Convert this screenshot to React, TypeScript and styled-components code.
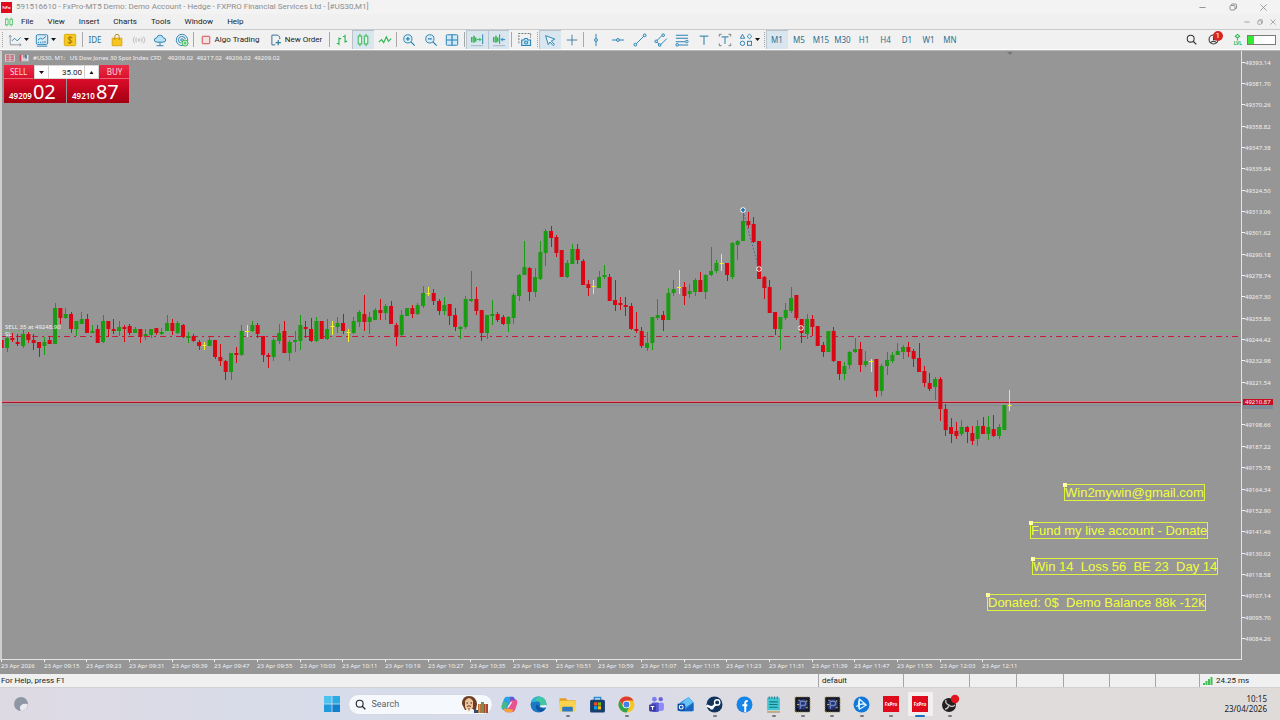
import React from "react";
import styled, { createGlobalStyle } from "styled-components";

const UI = `Roboto, "Open Sans", "Liberation Sans", sans-serif`;
const NARROW = `"Noto Sans", "Open Sans", "Liberation Sans", sans-serif`;
const BLUE = "#2b82b4";
const GREEN = "#2fb84f";

const GlobalStyle = createGlobalStyle`
  *, *::before, *::after { box-sizing: border-box; }
  body { margin: 0; font-family: ${UI}; font-size: 8px; color: #1b1b1b; overflow: hidden; }
  button, input { font: inherit; color: inherit; margin: 0; padding: 0; border: 0; background: none; }
  svg { display: block; flex: none; }
`;

/* ---------- window frame ---------- */

const Page = styled.div`
  display: flex;
  flex-direction: column;
  height: 100vh;
  min-height: 400px;
  background: #f0f0f0;
`;

const TitleBar = styled.header`
  display: flex;
  align-items: center;
  height: 14px;
  padding-left: 1px;
  background: #f3f3f3;
  color: #8d8d8d;
`;

const Title = styled.h1`
  flex: 1;
  margin: 0 0 0 4px;
  font-size: 8px;
  line-height: 14px;
  font-weight: 400;
`;

const WindowButtons = styled.div<{ $gap: number; $end: number }>`
  display: flex;
  align-items: center;
  gap: ${(p) => p.$gap}px;
  padding-right: ${(p) => p.$end}px;
  color: #808080;
  button { display: flex; }
`;

const MenuBar = styled.nav`
  display: flex;
  align-items: center;
  height: 15px;
  padding-left: 4px;
  background: #f0f0f0;
`;

const MenuList = styled.div`
  display: flex;
  flex: 1;
  gap: 14px;
  padding-left: 7px;
  line-height: 15px;
`;

const ToolBar = styled.div`
  display: flex;
  align-items: stretch;
  height: 21px;
  border-top: 1px solid #cacaca;
  border-bottom: 1px solid #fbfbfb;
  background: #f1f1f1;
`;

const Tool = styled.button<{ $w?: number; $on?: boolean; $gap?: number }>`
  display: flex;
  align-items: center;
  justify-content: center;
  gap: ${(p) => p.$gap ?? 2}px;
  width: ${(p) => p.$w ?? 22}px;
  flex: none;
  white-space: nowrap;
  background: ${(p) => (p.$on ? "#d9e6ef" : "none")};
  box-shadow: ${(p) => (p.$on ? "inset 1px 1px #b9c4cc" : "none")};
`;

const TimeframeTool = styled(Tool)`
  color: #2d6f8f;
  font-family: ${NARROW};
`;

const Separator = styled.span<{ $w?: number }>`
  flex: none;
  width: ${(p) => p.$w ?? 3}px;
  margin: 2px 0;
  background: linear-gradient(#a9a9a9, #a9a9a9) center / 1px 100% no-repeat;
`;

const Grip = styled.span<{ $w?: number }>`
  flex: none;
  width: ${(p) => p.$w ?? 3}px;
  margin: 2px 0;
  background: repeating-linear-gradient(#a0a0a0 0 1px, transparent 1px 2px) center / 1px 100% no-repeat;
`;

const ToolEnd = styled.div`
  display: flex;
  align-items: center;
  gap: 11px;
  margin-left: auto;
  padding-right: 4px;
`;

const Account = styled.button`
  position: relative;
  display: flex;
  margin-right: 2px;
`;

const Badge = styled.span`
  position: absolute;
  right: -4px;
  top: -3px;
  width: 10px;
  height: 10px;
  border-radius: 50%;
  background: #d92424;
  color: #fff;
  line-height: 10px;
`;

const Level = styled.span`
  display: flex;
  flex-direction: column;
  align-items: center;
  margin-left: 2px;
  color: #2fb84f;
  font-size: 5px;
  font-weight: 700;
  line-height: 5px;
`;

const Battery = styled.span`
  width: 29px;
  height: 10px;
  margin-left: -6px;
  border: 1px solid #7b7b7b;
  background: linear-gradient(90deg, #35ea35 6px, #fff 6px);
`;

/* ---------- chart ---------- */

const ChartArea = styled.main`
  display: grid;
  grid-template-columns: 1fr 38px;
  grid-template-rows: 1fr 14px;
  flex: 1;
  min-height: 0;
  border-top: 1px solid #b4b4b4;
  background: #969696;
  font-family: ${NARROW};
`;

const Plot = styled.section`
  position: relative;
  overflow: hidden;
  border: solid #e4e4e4;
  border-width: 0 1px 1px 2px;
  border-left-color: #cfcfcf;
`;

const Canvas = styled.svg`
  width: 100%;
  height: 100%;
  overflow: hidden;
`;

const AxisCanvas = styled(Canvas)`
  font-size: 6px;
  fill: #f2f2f2;
`;

const TimeScale = styled(AxisCanvas)`
  grid-column: 1 / -1;
`;

const Overlay = styled.div`
  position: absolute;
  left: 2px;
  top: 2px;
`;

const Caption = styled.div`
  display: flex;
  align-items: center;
  gap: 4px;
  height: 10px;
  padding-left: 1px;
  color: #f4f4f4;
  font-size: 6px;
  white-space: pre;
`;

const TradePanel = styled.form`
  display: grid;
  grid-template-columns: 62px 62px;
  column-gap: 1px;
  width: 125px;
  margin-top: 2px;
  position: relative;
`;

const Quote = styled.button<{ $side: "left" | "right" }>`
  display: flex;
  flex-direction: column;
  height: 38px;
  color: #fff;
  background: linear-gradient(#ea2c48, #d40a26 45%, #a30012);
  text-align: ${(p) => p.$side};
`;

const QuoteName = styled.span<{ $side: "left" | "right" }>`
  align-self: ${(p) => (p.$side === "left" ? "flex-start" : "flex-end")};
  width: 29px;
  height: 14px;
  line-height: 14px;
  text-align: center;
  color: #ffd9dd;
  border-bottom: 1px solid #ee6274;
`;

const QuotePrice = styled.span`
  display: flex;
  align-items: baseline;
  align-self: flex-start;
  gap: 1px;
  padding-left: 5px;
  font-weight: 600;
  line-height: 25px;
  b { font-size: 20px; font-weight: 400; }
`;

const Volume = styled.div`
  position: absolute;
  left: 30px;
  top: 0;
  display: flex;
  width: 65px;
  height: 14px;
  background: #fff;
  border: 1px solid #d8d8d8;
  font-family: ${UI};
  button { display: flex; align-items: center; justify-content: center; width: 13px; }
  input {
    flex: 1;
    min-width: 0;
    padding-right: 2px;
    text-align: right;
    border: solid #cfcfcf;
    border-width: 0 1px;
  }
`;

const Note = styled.div<{ $x: number; $y: number }>`
  position: absolute;
  left: ${(p) => p.$x}px;
  top: ${(p) => p.$y}px;
  height: 17px;
  border: 1px solid #e0f23c;
  color: #f0ff3c;
  font: 13px/15px "Liberation Sans", Arial, sans-serif;
  white-space: pre;
  &::before {
    content: "";
    position: absolute;
    left: -2px;
    top: -2px;
    width: 4px;
    height: 4px;
    background: #ffffa0;
  }
`;

/* ---------- bottom bars ---------- */

const StatusBar = styled.footer`
  display: flex;
  height: 14px;
  line-height: 14px;
  background: #f0f0f0;
  border-bottom: 1px solid #d2d2d6;
`;

const StatusCell = styled.span<{ $w?: number }>`
  display: flex;
  align-items: center;
  gap: 3px;
  ${(p) => (p.$w ? `width: ${p.$w}px; flex: none; border-left: 1px solid #a5a5a5; padding-left: 3px;` : "flex: 1; padding-left: 1px;")}
  height: 13px;
`;

const TaskBar = styled.div`
  display: grid;
  grid-template-columns: 1fr auto 1fr;
  align-items: center;
  height: 32px;
  background: linear-gradient(90deg, #dedae4, #d6dcea 28%, #d9dbea 48%, #dfdcde 62%, #dfdbd9);
  font-family: ${NARROW};
`;

const TaskGroup = styled.div`
  display: flex;
  align-items: center;
`;

const StartButton = styled.button`
  display: flex;
  justify-content: center;
  width: 32px;
`;

const SearchBox = styled.label`
  display: flex;
  align-items: center;
  width: 145px;
  height: 21px;
  padding: 0 3px 0 6px;
  margin-right: 2px;
  border-radius: 11px;
  background: #f5f8fd;
  border: 1px solid #d5d8e2;
  input {
    flex: 1;
    min-width: 0;
    margin-left: 6px;
    font: 9px ${UI};
    outline: 0;
  }
  input::placeholder { color: #5c5f66; opacity: 1; }
`;

const Apps = styled.div`
  display: flex;
  width: 470px;
`;

const AppButton = styled.button<{ $state?: "open" | "active" }>`
  position: relative;
  display: flex;
  flex: 1;
  align-items: center;
  justify-content: center;
  height: 24px;
  border-radius: 3px;
  background: ${(p) => (p.$state === "active" ? "linear-gradient(#f3efee, #f3efee) center / 25px 24px no-repeat" : "none")};
  &::after {
    content: "";
    display: ${(p) => (p.$state ? "block" : "none")};
    position: absolute;
    bottom: -1px;
    width: ${(p) => (p.$state === "active" ? 10 : 4)}px;
    height: 2px;
    border-radius: 1px;
    background: ${(p) => (p.$state === "active" ? "#1670c4" : "#7a7a7e")};
  }
`;

const Clock = styled.time`
  justify-self: end;
  padding-right: 13px;
  text-align: right;
  line-height: 10px;
`;

/* ---------- icons ---------- */

type IconProps = { size?: number; color?: string; children: React.ReactNode };

const Icon = ({ size = 14, color = BLUE, children }: IconProps) => (
  <svg width={size} height={size} viewBox="0 0 16 16" fill="none" stroke={color} strokeWidth="1.1" aria-hidden="true">
    {children}
  </svg>
);

const Caret = ({ up }: { up?: boolean }) => (
  <svg width="5" height="3" viewBox="0 0 5 3" aria-hidden="true">
    <path d={up ? "M0.5 3h4L2.5 0z" : "M0 0h5L2.5 3z"} fill="#111" />
  </svg>
);

const FxLogo = ({ size }: { size: number }) => (
  <svg width={size} height={size} viewBox="0 0 16 16" aria-hidden="true">
    <rect width="16" height="16" fill="#df0a1c" />
    <text x="8" y="9.6" fontSize="4.4" fontWeight="700" fill="#fff" textAnchor="middle">FxPro</text>
  </svg>
);

const MinimizeIcon = ({ size }: { size: number }) => <Icon size={size} color="#888"><path d="M1 8h14" strokeWidth="2" /></Icon>;
const RestoreIcon = ({ size }: { size: number }) => (
  <Icon size={size} color="#888"><path d="M5 4V3q0-1 1-1h7q2 0 2 2v6q0 1-1 1h-2" strokeWidth="1.8" /><rect x="2" y="5" width="10" height="9" rx="2" strokeWidth="1.8" /></Icon>
);
const CloseIcon = ({ size }: { size: number }) => <Icon size={size} color="#888"><path d="M1 1l14 14M15 1L1 15" strokeWidth="1.8" /></Icon>;

const CandlesIcon = ({ size = 14 }: { size?: number }) => (
  <Icon size={size} color={GREEN}><path d="M4.500 1v2.500M4.500 12.500V15M11.500 1v2.500M11.500 12.500V15" /><rect x="2.500" y="3.500" width="4" height="9" fill="#e2f7e6" /><rect x="9.500" y="3.500" width="4" height="9" fill="#e2f7e6" /></Icon>
);

const icons = {
  line: <Icon color="#5f7f94"><path d="M2.500 3v10.500H15M1 4.500l1.500-2L4 4.500M13 12l2 1.500-2 1.500" stroke="#8b9aa4" /><path d="M4.500 9l3-3 3 3 4-4" stroke={BLUE} /></Icon>,
  indicators: <Icon><rect x="1.500" y="2" width="13" height="11" rx="1.500" fill="#d9ecf6" /><path d="M3.500 8l2.500-2 2.500 1L12.500 4M4 11.500V10M6.500 11.500V10M9 11.500V9.500M11.500 11.500V9M2 15h12" /></Icon>,
  dollar: <Icon><rect x="1.500" y="1.500" width="13" height="13" rx="1" fill="#f7c81e" stroke="#dcaa10" /><path d="M10.500 5.500Q8 4 6.300 5.300T8 8t1.800 2.700-4.300.2M8 3.300v9.400" stroke="#9b7408" /></Icon>,
  bag: <Icon><path d="M2.500 6h11v8.500h-11z" fill="#f6c51f" stroke="#d9a413" /><path d="M5.500 8V4Q5.500 1.500 8 1.500T10.500 4v4" stroke="#b98d10" /></Icon>,
  signal: <Icon color="#bcbcbc"><circle cx="8" cy="8" r="1.300" /><path d="M5.200 5.200q-2 2.800 0 5.600M10.800 5.200q2 2.800 0 5.600M2.800 4q-2.800 4 0 8M13.200 4q2.800 4 0 8" /></Icon>,
  cloud: <Icon><path d="M4.500 10.500Q1.500 10.300 1.500 8T4.300 5.500Q5 2.500 8 2.500T11.700 5.500Q14.500 5.600 14.500 8t-3 2.500z" fill="#b9e2f4" /><path d="M8 10.500v4M4 14.500h8" /></Icon>,
  target: <Icon><path d="M9 14.400A6.500 6.500 0 1 1 14.400 9M7 11.800A4 4 0 1 1 11.800 7" /><circle cx="8" cy="8" r="1.500" /><circle cx="11.500" cy="11.500" r="3.400" fill="#dff6e3" stroke={GREEN} /><path d="M11.500 9.700v3.600M9.700 11.500h3.600" stroke={GREEN} /></Icon>,
  stop: <Icon size={10}><rect x="2" y="2" width="12" height="12" rx="1" fill="#fbe0e0" stroke="#cf4a4a" strokeWidth="1.500" /></Icon>,
  order: <Icon size={12} color="#37718f"><path d="M13 7V4l-2.500-2.500h-8v13H7" strokeWidth="1.300" /><path d="M11 8v7M7.500 11.500h7" stroke="#2b7b9b" strokeWidth="1.500" /></Icon>,
  bars: <Icon color={GREEN}><path d="M4.500 5v9M2 12h2.500M4.500 6.500H7M11.500 2v9M9 4h2.500M11.500 9.500H14" strokeWidth="1.300" /></Icon>,
  candles: <CandlesIcon />,
  zigzag: <Icon color={GREEN}><path d="M1 10.500l3-3 2.500 3.500 3-6.500 2.500 5 3-3" strokeWidth="1.300" /></Icon>,
  zoomIn: <Icon><circle cx="6.700" cy="6.700" r="4.700" fill="#d9edf7" /><path d="M10.200 10.200l4.300 4.300M6.700 4.500v4.400M4.500 6.700h4.400" strokeWidth="1.400" /></Icon>,
  zoomOut: <Icon><circle cx="6.700" cy="6.700" r="4.700" fill="#d9edf7" /><path d="M10.200 10.200l4.300 4.300M4.500 6.700h4.400" strokeWidth="1.400" /></Icon>,
  grid: <Icon><rect x="1.500" y="2" width="13" height="12" rx="1" fill="#cfe9f6" /><path d="M8 2v12M1.500 8h13" strokeWidth="1.400" /></Icon>,
  scroll: <Icon><path d="M2 4.500v6M4.500 3v8M6.500 5v5" stroke={GREEN} strokeWidth="1.800" /><path d="M8 7.500h4.500M10.500 5.500l2 2-2 2" stroke={GREEN} /><path d="M14.500 1.500v11" /><path d="M1 14.500h14" stroke="#9fb4c2" /></Icon>,
  shift: <Icon><path d="M2 4.500v6M4.500 3v8M6.500 5v5" stroke={GREEN} strokeWidth="1.800" /><path d="M8.700 1.500v11M15 7.500h-4.500M12.500 5.500l-2 2 2 2" /><path d="M1 14.500h14" stroke="#9fb4c2" /></Icon>,
  camera: <Icon size={15}><path d="M2 12V1.500h12.500V6" stroke="#6b7880" strokeDasharray="2 1.300" /><path d="M5 8.500h2.200l1-1.500h2.600l1 1.500H14.500v6H5z" fill="#c6e6f5" /><circle cx="9.700" cy="11.300" r="1.600" /></Icon>,
  cursor: <Icon><path d="M3 3l10.500 4-4 2 3.500 4-1.500 1.300-3.500-4-2 3z" fill="#eaf5fb" /></Icon>,
  cross: <Icon color="#3f7f9e"><path d="M8 2v12M2 8h12" /></Icon>,
  vline: <Icon><path d="M8 1v14" /><circle cx="8" cy="8" r="1.700" fill="#cfe9f6" /></Icon>,
  hline: <Icon><path d="M1 8h14" /><circle cx="8" cy="8" r="1.700" fill="#cfe9f6" /></Icon>,
  trend: <Icon><path d="M3.500 12.500l9-9" /><circle cx="2.700" cy="13.300" r="1.600" fill="#cfe9f6" /><circle cx="13.300" cy="2.700" r="1.600" fill="#cfe9f6" /></Icon>,
  channel: <Icon><path d="M2.500 9.500l7-7M7.500 13.500l7-7M2.500 9.500l4 4" /><circle cx="2.500" cy="9.500" r="1.500" fill="#cfe9f6" /><circle cx="6.500" cy="13.700" r="1.500" fill="#cfe9f6" /><circle cx="10.500" cy="2.500" r="1.500" fill="#cfe9f6" /></Icon>,
  fibo: <Icon><path d="M1 2.500h14M1 6h14M1 10h11M4 13.700h11" strokeWidth="1.200" /><circle cx="13.500" cy="9.800" r="1.500" fill="#cfe9f6" /><circle cx="2.500" cy="13.500" r="1.500" fill="#cfe9f6" /></Icon>,
  text: <Icon color="#4a8fb3"><path d="M3 3.500h10M8 3.500v10" strokeWidth="1.400" /></Icon>,
  textBox: <Icon color="#4a8fb3"><path d="M4 4.500h8M8 4.500v8" strokeWidth="1.300" /><path d="M1.500 4V1.500H4M12 1.500h2.500V4M14.500 12v2.500H12M4 14.500H1.500V12" stroke="#6b7880" /></Icon>,
  shapes: <Icon><path d="M4 1.500l2.500 4.500h-5zM12 1.300l2.700 2.600L12 6.500 9.300 3.900z" /><circle cx="4" cy="11.800" r="2.500" /><rect x="9.700" y="9.500" width="4.600" height="4.600" /></Icon>,
  search: <Icon size={11} color="#333"><circle cx="6.800" cy="6.800" r="5" strokeWidth="1.500" /><path d="M10.500 10.500l4.500 4.500" strokeWidth="1.700" /></Icon>,
  user: <Icon size={11} color="#333"><circle cx="8" cy="8" r="6.500" strokeWidth="1.500" /><path d="M8 3.500v5h4M3 13q5-5 10 0" strokeWidth="1.500" /></Icon>,
};

const Windows = () => (
  <svg width="16" height="16" viewBox="0 0 16 16" aria-hidden="true">
    <path d="M0 0h7.600v7.600H0z" fill="#4cc3ee" /><path d="M8.400 0H16v7.600H8.400z" fill="#2ba9e2" />
    <path d="M0 8.400h7.600V16H0z" fill="#1f9bdc" /><path d="M8.400 8.400H16V16H8.400z" fill="#1180cc" />
  </svg>
);

const Poet = () => (
  <svg width="28" height="17" viewBox="0 0 28 17" aria-hidden="true">
    <path d="M1 8Q1 0 8 0t8 8l-1 6H4z" fill="#6b3d22" />
    <path d="M4 5q4-6 8 0v6q-2 5-4 5t-4-5z" fill="#eec49c" />
    <path d="M4 16h10l-2-3H6z" fill="#f5f2ea" /><path d="M6 10.500q2-1.500 4 0M8 12v2.500" stroke="#6b3d22" fill="none" />
    <path d="M5.500 7h1.500M9.500 7H11" stroke="#3a2415" />
    <path d="M13 14h4v3h-4z" fill="#2f4d7a" /><path d="M17 8h3v9h-3z" fill="#b5733a" />
    <path d="M20 6h3v11h-3z" fill="#7b8d4d" /><path d="M23 8h4v9h-4z" fill="#a8472c" /><path d="M24.500 8v9M18.500 8v9" stroke="#e4b56a" strokeWidth=".6" />
  </svg>
);

const AppSvg = ({ children }: { children: React.ReactNode }) => (
  <svg width="17" height="17" viewBox="0 0 16 16" aria-hidden="true">{children}</svg>
);

const ChipIcon = () => (
  <AppSvg>
    <rect x="1" y="1" width="14" height="14" rx="1" fill="#14182a" stroke="#8a7d4a" strokeDasharray="1 1" />
    <path d="M3 5h2l2-2h4l2 3v4l-3 3H5l-2-3z" fill="#22346e" />
    <path d="M6 12V5h3q2 0 2 2t-2 2H6" fill="none" stroke="#6f83c4" strokeWidth="1.300" /><path d="M3 8h2M11 11h2M4 4h1.500M12 4v1.500" stroke="#d3b556" />
  </AppSvg>
);

type App = { name: string; state?: "open" | "active"; art: React.ReactNode };

const apps: App[] = [
  { name: "Copilot", art: <AppSvg>
    <path d="M5.500.8h5.300q1.400 0 1.900 1.500L13.300 4H9.800L7 12.500Q6.500 13 5 13H3.200Q.6 13 .6 10.300q0-1 .5-2.600L2.700 3Q3.500.8 5.500.8z" fill="#2aa3e0" />
    <path d="M10.500 15.200H5.200q-1.400 0-1.900-1.500L2.700 12h3.500L9 3.500Q9.500 3 11 3h1.800q2.600 0 2.600 2.700 0 1-.5 2.600L13.300 13q-.8 2.200-2.800 2.200z" fill="#e8528f" />
    <path d="M.6 10.300q0-1 .5-2.600L2 5l4 1.500L4 13h-.8Q.6 13 .6 10.300z" fill="#48b982" />
    <path d="M10.500 15.200H5.200q-1.400 0-1.900-1.500L2.700 12h4l4.800 1z" fill="#f6a43a" />
    <path d="M12.700 2.300L13.300 4H9.800l-.6 1.500L8 1l2.800-.2q1.400 0 1.900 1.500z" fill="#6458d8" />
    <path d="M9.300 5.300h1.500L7.200 11H5.700z" fill="#fff" opacity=".85" />
  </AppSvg> },
  { name: "Edge", art: <AppSvg>
    <circle cx="8" cy="8" r="7.500" fill="#1b78c8" />
    <path d="M1 6Q3 .5 8.500.5T15.500 7q0 3.500-4 3.500-2.500 0-2-1.500 1-2-1-3.500T1 6z" fill="#42c8a0" />
    <path d="M1 6Q3 .8 8 .6q-3 1.500-2 5Q3 4.500 1 6z" fill="#2fb4d8" />
    <path d="M6 8q-2 5 4 7 3-.3 5-3.500-6 2-7-2.500z" fill="#0f559f" /><path d="M9.500 9q-.5 2.500 5.500 1.500l.5-2z" fill="#eef6fb" />
  </AppSvg> },
  { name: "File Explorer", state: "open", art: <AppSvg>
    <path d="M.5 2h6l1.500 2h7.500v4H.5z" fill="#e0a021" /><rect x=".5" y="4.500" width="15" height="10" rx="1" fill="#fbd24e" />
    <path d="M3 14.500V11q0-1 1-1h8q1 0 1 1v3.500z" fill="#2b78c4" />
  </AppSvg> },
  { name: "Microsoft Store", art: <AppSvg>
    <path d="M5 4V1.500h6V4" fill="none" stroke="#2d8fd6" strokeWidth="1.400" /><rect x="1" y="3.500" width="14" height="12" rx="1.500" fill="#173f6e" />
    <path d="M4.700 6h3v3h-3z" fill="#f25022" /><path d="M8.300 6h3v3h-3z" fill="#7fba00" /><path d="M4.700 9.600h3v3h-3z" fill="#00a4ef" /><path d="M8.300 9.600h3v3h-3z" fill="#ffb900" />
  </AppSvg> },
  { name: "Chrome", state: "open", art: <AppSvg>
    <circle cx="8" cy="8" r="7.500" fill="#f9c51d" /><path d="M1.500 4.250A7.500 7.500 0 0 1 14.500 4.250H8L5 9.500z" fill="#df3b30" />
    <path d="M1.500 4.250A7.500 7.500 0 0 0 8 15.500L11.300 9.700 4.800 9.800z" fill="#2fa350" />
    <circle cx="8" cy="8" r="3.600" fill="#fff" /><circle cx="8" cy="8" r="2.800" fill="#3f80ea" />
  </AppSvg> },
  { name: "Teams", art: <AppSvg>
    <circle cx="6" cy="3" r="2.200" fill="#7b7ff0" /><circle cx="12" cy="3" r="2" fill="#6a62dd" />
    <rect x="3" y="6" width="8" height="9" rx="2" fill="#5558d0" /><rect x="10" y="6" width="5" height="8" rx="2" fill="#8f8bf4" />
    <rect x="1" y="8" width="6.500" height="6.500" rx="1" fill="#3b3aa8" /><path d="M2.500 9.800H6M4.250 9.800v3.200" stroke="#fff" />
  </AppSvg> },
  { name: "Outlook", art: <AppSvg>
    <path d="M3 6l8-5 4.500 5v7q0 1.500-1.500 1.500H3z" fill="#2b8fe0" /><path d="M4 7l7-6 4 5-6 4z" fill="#69c3f4" /><path d="M15.500 6v8H6z" fill="#1a63c0" />
    <rect x=".5" y="7" width="7" height="7" rx="1" fill="#0f4fa8" /><circle cx="4" cy="10.500" r="1.800" fill="none" stroke="#fff" />
  </AppSvg> },
  { name: "Steam", state: "open", art: <AppSvg>
    <circle cx="8" cy="8" r="7.500" fill="#12335c" /><path d="M.6 9l5 2 4-3.500" stroke="#fff" strokeWidth="2.200" fill="none" />
    <circle cx="10.500" cy="6" r="2.500" fill="#12335c" stroke="#fff" strokeWidth="1.300" /><circle cx="5.500" cy="11" r="1.800" fill="#fff" />
  </AppSvg> },
  { name: "Facebook", art: <AppSvg>
    <circle cx="8" cy="8" r="7.500" fill="#1684e8" /><path d="M8.700 15V6.500Q8.700 4.500 11 4.700M6 8.700h4.700" stroke="#fff" strokeWidth="1.900" fill="none" />
  </AppSvg> },
  { name: "Notepad", state: "open", art: <AppSvg>
    <rect x="2" y="1.500" width="12" height="14" rx="1" fill="#43c6cf" /><path d="M4 .5v2M6.500.5v2M9 .5v2M11.500.5v2" stroke="#1e6e8a" />
    <path d="M4 5.500h8M4 8h8M4 10.500h8" stroke="#137987" /><path d="M2 13.500h12v2H2z" fill="#e8e4d6" /><path d="M2 15h12" stroke="#ba7c4a" />
  </AppSvg> },
  { name: "Trading Tool A", state: "open", art: <ChipIcon /> },
  { name: "Trading Tool B", state: "open", art: <ChipIcon /> },
  { name: "Battle.net", state: "open", art: <AppSvg>
    <circle cx="8" cy="8" r="7.500" fill="#1277d8" />
    <path d="M6 2.800l6.500 5.700-6.500 4zM6 2.800q-1.800 5 0 9.700M3 10q5-4 9.500-1.500" stroke="#d9f1ff" fill="none" strokeWidth="1.200" strokeLinejoin="round" />
  </AppSvg> },
  { name: "FxPro Terminal", state: "open", art: <FxLogo size={16} /> },
  { name: "FxPro MT5", state: "active", art: <FxLogo size={16} /> },
  { name: "OBS Studio", state: "open", art: <svg width="20" height="20" viewBox="0 0 20 20" aria-hidden="true">
    <circle cx="9" cy="11" r="7" fill="#231f20" /><path d="M9 11q-4-1-3-5M9 11q3 3 6 0M9 11q-1 4-4 4" stroke="#bdbdbd" fill="none" strokeWidth="1.400" />
    <circle cx="15" cy="5" r="4.200" fill="#e3141c" />
  </svg> },
];

/* ---------- chart data ---------- */

// colour, high, body top, body bottom, low; one entry per minute
type Candle = [c: "g" | "r" | "y", high: number, top: number, bottom: number, low: number];

const candles: Candle[] = [
  ["r", 340, 340, 348, 348], ["g", 337, 338, 348, 352], ["r", 333, 338, 340, 342], ["r", 334, 342, 344, 346], ["g", 330, 334, 346, 348],
  ["r", 332, 334, 340, 343], ["r", 334, 340, 343, 350], ["r", 342, 342, 348, 357], ["g", 337, 342, 346, 355], ["r", 336, 340, 344, 344],
  ["g", 303, 308, 344, 344], ["r", 308, 308, 318, 324], ["g", 308, 314, 318, 319], ["r", 312, 314, 329, 333], ["g", 321, 321, 329, 336],
  ["g", 312, 319, 324, 324], ["r", 314, 319, 333, 333], ["g", 325, 331, 333, 333], ["r", 325, 329, 343, 343], ["g", 315, 321, 342, 343],
  ["r", 321, 321, 329, 337], ["r", 319, 329, 331, 334], ["g", 321, 327, 331, 336], ["r", 325, 327, 329, 342], ["r", 324, 326, 333, 335],
  ["g", 327, 329, 333, 333], ["r", 329, 329, 337, 343], ["g", 329, 334, 336, 340], ["g", 329, 329, 335, 338], ["r", 328, 328, 333, 335],
  ["g", 328, 332, 334, 335], ["g", 315, 323, 331, 331], ["r", 319, 323, 331, 335], ["g", 321, 323, 333, 334], ["r", 324, 325, 337, 338],
  ["g", 332, 336, 338, 343], ["r", 334, 336, 341, 342], ["r", 340, 342, 346, 350], ["y", 342, 345, 346, 350], ["g", 337, 340, 346, 346],
  ["r", 340, 340, 357, 359], ["r", 344, 357, 361, 366], ["r", 360, 361, 372, 380], ["g", 353, 353, 372, 380], ["r", 347, 353, 355, 363],
  ["g", 325, 331, 355, 356], ["y", 325, 331, 332, 337], ["g", 321, 325, 331, 332], ["r", 323, 325, 334, 338], ["r", 336, 336, 355, 362],
  ["r", 353, 355, 357, 368], ["g", 338, 340, 357, 361], ["g", 324, 333, 341, 344], ["r", 321, 331, 353, 353], ["g", 340, 342, 353, 361],
  ["g", 331, 340, 342, 352], ["g", 315, 325, 341, 350], ["r", 321, 327, 329, 338], ["r", 318, 329, 341, 342], ["g", 317, 321, 341, 342],
  ["r", 321, 321, 339, 339], ["g", 319, 329, 339, 340], ["y", 321, 326, 327, 335], ["g", 317, 323, 327, 333], ["r", 314, 323, 331, 334],
  ["y", 329, 332, 333, 342], ["g", 317, 321, 333, 334], ["g", 310, 312, 322, 327], ["r", 295, 314, 322, 331], ["g", 312, 317, 322, 334],
  ["g", 308, 310, 320, 320], ["r", 299, 310, 313, 320], ["g", 304, 306, 313, 320], ["r", 301, 306, 324, 324], ["r", 323, 325, 337, 346],
  ["g", 310, 315, 335, 336], ["g", 308, 308, 316, 316], ["r", 305, 308, 314, 318], ["g", 303, 305, 314, 315], ["g", 286, 293, 306, 308],
  ["y", 287, 293, 294, 296], ["r", 289, 293, 301, 305], ["r", 299, 301, 311, 315], ["g", 297, 305, 311, 315], ["r", 304, 304, 316, 325],
  ["r", 308, 315, 327, 331], ["g", 326, 327, 329, 339], ["g", 296, 299, 327, 329], ["g", 271, 299, 301, 302], ["r", 287, 299, 311, 315],
  ["r", 310, 310, 333, 341], ["g", 315, 315, 333, 339], ["g", 300, 314, 316, 325], ["r", 312, 314, 320, 322], ["r", 315, 317, 324, 325],
  ["g", 316, 317, 324, 332], ["g", 293, 295, 318, 324], ["g", 274, 275, 296, 301], ["g", 241, 267, 275, 275], ["r", 267, 268, 292, 301],
  ["g", 268, 277, 292, 297], ["g", 241, 252, 279, 280], ["g", 229, 231, 253, 266], ["r", 226, 231, 238, 247], ["r", 235, 237, 253, 257],
  ["r", 250, 250, 277, 277], ["g", 260, 263, 277, 278], ["g", 244, 249, 264, 264], ["r", 244, 249, 260, 264], ["r", 259, 261, 285, 285],
  ["r", 280, 284, 288, 296], ["y", 280, 286, 287, 294], ["g", 271, 277, 288, 288], ["g", 265, 275, 277, 279], ["r", 274, 277, 301, 301],
  ["r", 280, 300, 305, 311], ["r", 297, 303, 305, 310], ["r", 297, 305, 307, 316], ["r", 303, 306, 329, 330], ["r", 312, 329, 331, 333],
  ["r", 327, 331, 346, 348], ["g", 332, 343, 348, 351], ["g", 317, 317, 343, 350], ["g", 299, 315, 318, 320], ["r", 311, 315, 320, 331],
  ["g", 288, 293, 320, 320], ["g", 280, 289, 293, 296], ["y", 270, 287, 288, 294], ["r", 282, 287, 296, 305], ["g", 284, 291, 294, 298],
  ["g", 278, 280, 292, 296], ["r", 272, 280, 292, 292], ["g", 274, 275, 292, 299], ["g", 247, 271, 275, 276], ["g", 260, 263, 271, 273],
  ["y", 254, 263, 264, 271], ["r", 263, 263, 275, 281], ["g", 242, 243, 277, 279], ["g", 240, 241, 245, 260], ["g", 210, 221, 241, 241],
  ["r", 212, 221, 225, 228], ["r", 217, 224, 242, 243], ["r", 241, 241, 279, 279], ["r", 276, 277, 288, 299], ["r", 280, 287, 313, 313],
  ["r", 312, 312, 329, 335], ["g", 317, 317, 329, 350], ["g", 303, 310, 318, 320], ["g", 287, 298, 311, 313], ["r", 295, 295, 318, 320],
  ["r", 319, 319, 333, 343], ["g", 314, 319, 334, 339], ["r", 315, 319, 327, 336], ["r", 326, 326, 346, 346], ["r", 342, 345, 352, 357],
  ["g", 331, 331, 352, 352], ["r", 327, 331, 361, 362], ["r", 361, 361, 374, 380], ["g", 362, 366, 374, 380], ["g", 351, 352, 365, 369],
  ["g", 338, 349, 352, 353], ["r", 342, 349, 365, 372], ["g", 351, 361, 365, 367], ["y", 359, 361, 362, 372], ["r", 359, 359, 391, 397],
  ["g", 364, 366, 391, 396], ["g", 352, 360, 366, 375], ["g", 352, 355, 361, 363], ["g", 343, 351, 355, 355], ["g", 345, 347, 352, 359],
  ["r", 342, 347, 352, 357], ["r", 349, 351, 359, 367], ["r", 343, 358, 372, 372], ["r", 366, 371, 383, 387], ["r", 373, 383, 389, 391],
  ["g", 377, 379, 387, 400], ["r", 377, 379, 409, 421], ["r", 404, 409, 430, 436], ["r", 418, 427, 434, 443], ["r", 422, 431, 436, 439],
  ["g", 420, 427, 434, 436], ["r", 426, 427, 432, 443], ["r", 426, 433, 441, 445], ["g", 420, 426, 439, 446], ["r", 417, 426, 434, 434],
  ["g", 416, 427, 434, 440], ["r", 415, 429, 436, 437], ["g", 424, 427, 436, 439], ["g", 405, 405, 430, 430], ["y", 390, 405, 406, 411],
];

const candleColor = { g: "#1b9a14", r: "#da0614", y: "#f6f21e" };

const CHART_TOP = 51;
const CANDLE_STEP = 16 / 3;
const ASK_ROW = 16;

const prices = Array.from({ length: 28 }, (_, i) => (49393.14 - i * 11.44).toFixed(2));
const priceY = (i: number) => Math.round(10.5 + i * 21.35);

const times = Array.from({ length: 24 }, (_, i) => {
  if (i === 0) return "23 Apr 2026";
  const m = 9 * 60 + 7 + i * 8;
  return `23 Apr ${String(Math.floor(m / 60)).padStart(2, "0")}:${String(m % 60).padStart(2, "0")}`;
});

const Marker = ({ x, y, color }: { x: number; y: number; color: string }) => (
  <g>
    <circle cx={x} cy={y} r="2.700" fill="#fff" opacity=".85" />
    <path d={`M${x - 2} ${y}h4M${x} ${y - 2}v4`} stroke={color} strokeWidth="1.600" />
  </g>
);

const PriceChart = () => (
  <Canvas role="img" aria-label="US30 one minute candlestick chart">
    <path d="M1005 1h6l-3 3z" fill="#777" />
    <g transform={`translate(-2 ${-CHART_TOP})`}>
      <line x1="0" x2="4000" y1="331.500" y2="331.500" stroke="#6fc46a" strokeOpacity=".55" strokeDasharray="3 1" />
      <line x1="0" x2="4000" y1="336.500" y2="336.500" stroke="#c41c38" strokeDasharray="6 4 2 4" />
      <line x1="0" x2="4000" y1="401.500" y2="401.500" stroke="#d47e86" />
      <line x1="0" x2="4000" y1="402.500" y2="402.500" stroke="#b3142c" />
      <line x1="0" x2="4000" y1="405.500" y2="405.500" stroke="#828c96" />
      {candles.map(([c, high, top, bottom, low], i) => {
        const x = 1.7 + i * CANDLE_STEP;
        return (
          <g key={i} fill={candleColor[c]}>
            <rect x={Math.round(x - 0.5)} y={high} width="1" height={low - high} />
            <rect x={x - 2} y={top} width="4" height={bottom - top} />
          </g>
        );
      })}
      <path d="M743 211L759 269" stroke="#4a5f9e" strokeDasharray="1.500 2" />
      <Marker x={743} y={210} color="#1e6fb0" />
      <Marker x={759} y={269} color="#c4342c" />
      <Marker x={801} y={328} color="#c4342c" />
      <g fill="#f4f4f4" fontSize="6">
        <text x="5" y="329">SELL 35 at 49248.90</text>
        <text x="5" y="336">SL</text>
      </g>
    </g>
  </Canvas>
);

const PriceScale = () => (
  <AxisCanvas aria-label="Price scale">
    {prices.map((p, i) => i !== ASK_ROW && (
      <g key={p}>
        <rect x="0" y={priceY(i)} width="3" height="1" />
        <text x="3" y={priceY(i) + 3}>{p}</text>
      </g>
    ))}
    <rect x="1" y="352" width="30" height="6" fill="#7f8b99" />
    <rect x="1" y="348" width="30" height="6" fill="#c70d22" />
    <text x="3" y="353">49210.87</text>
  </AxisCanvas>
);

const notes = [
  { x: 1062, y: 433, text: "Win2mywin@gmail.com" },
  { x: 1028, y: 471, text: "Fund my live account - Donate" },
  { x: 1030, y: 507, text: "Win 14  Loss 56  BE 23  Day 14" },
  { x: 985, y: 543, text: "Donated: 0$  Demo Balance 88k -12k" },
];

const statusWidths = [66, 47, 47, 46, 46, 44];

/* ---------- page ---------- */

export default function App() {
  return (
    <Page>
      <GlobalStyle />
      <TitleBar>
        <FxLogo size={11} />
        <Title>591516610 - FxPro-MT5 Demo: Demo Account - Hedge - FXPRO Financial Services Ltd - [#US30,M1]</Title>
        <WindowButtons $gap={23} $end={13}>
          <button aria-label="Minimize"><MinimizeIcon size={7} /></button>
          <button aria-label="Restore"><RestoreIcon size={8} /></button>
          <button aria-label="Close"><CloseIcon size={7} /></button>
        </WindowButtons>
      </TitleBar>

      <MenuBar>
        <CandlesIcon size={10} />
        <MenuList>
          {["File", "View", "Insert", "Charts", "Tools", "Window", "Help"].map((m) => <button key={m}>{m}</button>)}
        </MenuList>
        <WindowButtons $gap={7} $end={4}>
          <button aria-label="Minimize chart"><MinimizeIcon size={6} /></button>
          <button aria-label="Restore chart"><RestoreIcon size={6} /></button>
          <button aria-label="Close chart"><CloseIcon size={6} /></button>
        </WindowButtons>
      </MenuBar>

      <ToolBar role="toolbar">
        <Grip $w={5} />
        <Tool $w={27} aria-label="Chart type">{icons.line}<Caret /></Tool>
        <Tool $w={27} aria-label="Indicators">{icons.indicators}<Caret /></Tool>
        <Tool aria-label="Market">{icons.dollar}</Tool>
        <Separator />
        <TimeframeTool>IDE</TimeframeTool>
        <Tool aria-label="Store">{icons.bag}</Tool>
        <Tool $w={21} aria-label="Signals">{icons.signal}</Tool>
        <Tool aria-label="VPS">{icons.cloud}</Tool>
        <Tool $w={21} aria-label="Network">{icons.target}</Tool>
        <Separator />
        <Tool $w={70} $gap={4}>{icons.stop}Algo Trading</Tool>
        <Tool $w={62} $gap={3}>{icons.order}New Order</Tool>
        <Separator $w={4} />
        <Tool $w={21} aria-label="Bar chart">{icons.bars}</Tool>
        <Tool $on aria-label="Candlesticks">{icons.candles}</Tool>
        <Tool $w={21} aria-label="Line chart">{icons.zigzag}</Tool>
        <Separator />
        <Tool aria-label="Zoom in">{icons.zoomIn}</Tool>
        <Tool $w={21} aria-label="Zoom out">{icons.zoomOut}</Tool>
        <Tool aria-label="Tile windows">{icons.grid}</Tool>
        <Separator />
        <Tool $on aria-label="Auto scroll">{icons.scroll}</Tool>
        <Tool $w={21} $on aria-label="Chart shift">{icons.shift}</Tool>
        <Separator $w={4} />
        <Tool aria-label="Screenshot">{icons.camera}</Tool>
        <Grip $w={4} />
        <Tool $on aria-label="Cursor">{icons.cursor}</Tool>
        <Tool $w={21} aria-label="Crosshair">{icons.cross}</Tool>
        <Separator />
        <Tool aria-label="Vertical line">{icons.vline}</Tool>
        <Tool aria-label="Horizontal line">{icons.hline}</Tool>
        <Tool $w={21} aria-label="Trend line">{icons.trend}</Tool>
        <Tool $w={21} aria-label="Channel">{icons.channel}</Tool>
        <Tool aria-label="Fibonacci">{icons.fibo}</Tool>
        <Tool $w={21} aria-label="Text">{icons.text}</Tool>
        <Tool aria-label="Text label">{icons.textBox}</Tool>
        <Tool $w={27} aria-label="Shapes">{icons.shapes}<Caret /></Tool>
        <Grip />
        <TimeframeTool $on>M1</TimeframeTool>
        <TimeframeTool>M5</TimeframeTool>
        <TimeframeTool>M15</TimeframeTool>
        <TimeframeTool $w={21}>M30</TimeframeTool>
        <TimeframeTool>H1</TimeframeTool>
        <TimeframeTool $w={21}>H4</TimeframeTool>
        <TimeframeTool>D1</TimeframeTool>
        <TimeframeTool $w={21}>W1</TimeframeTool>
        <TimeframeTool>MN</TimeframeTool>
        <ToolEnd>
          <button aria-label="Search">{icons.search}</button>
          <Account aria-label="Notifications">{icons.user}<Badge>1</Badge></Account>
          <Level>
            <Icon size={7} color={GREEN}><path d="M8 1l5 4-5 4-5-4zM8 9v6" strokeWidth="2.500" /></Icon>
            LVL
          </Level>
          <Battery />
        </ToolEnd>
      </ToolBar>

      <ChartArea>
        <Plot>
          <PriceChart />
          <Overlay>
            <Caption>
              <Icon size={10} color="#e9eef2"><rect x="1" y="3" width="14" height="10" fill="#c5545c" /><path d="M1 6.500h14M1 10h14M8 3v10" stroke="#dce8f4" /></Icon>
              <Icon size={10} color="#e9eef2"><rect x="1" y="3" width="5" height="10" fill="#d9435a" stroke="none" /><path d="M5 3v10M8 7v6M11 9v4M14 3v10" stroke="#e8f0fa" strokeWidth="2" /><path d="M11 3v5" stroke="#2f79b8" strokeWidth="2" /></Icon>
              <span>#US30, M1:   US Dow Jones 30 Spot Index CFD    49209.02  49217.02  49206.02  49209.02</span>
            </Caption>
            <TradePanel onSubmit={(e) => e.preventDefault()}>
              <Quote $side="left">
                <QuoteName $side="left">SELL</QuoteName>
                <QuotePrice>49209<b>02</b></QuotePrice>
              </Quote>
              <Quote $side="right">
                <QuoteName $side="right">BUY</QuoteName>
                <QuotePrice>49210<b>87</b></QuotePrice>
              </Quote>
              <Volume>
                <button type="button" aria-label="Decrease volume"><Caret /></button>
                <input aria-label="Volume" defaultValue="35.00" />
                <button type="button" aria-label="Increase volume"><Caret up /></button>
              </Volume>
            </TradePanel>
          </Overlay>
          {notes.map((n) => <Note key={n.text} $x={n.x} $y={n.y}>{n.text}</Note>)}
        </Plot>
        <PriceScale />
        <TimeScale aria-label="Time scale">
          {times.map((t, i) => {
            const x = Math.round(1 + i * 8 * CANDLE_STEP);
            return (
              <g key={t}>
                <rect x={x} y="0" width="1" height="2" />
                <text x={x} y="8">{t}</text>
              </g>
            );
          })}
        </TimeScale>
      </ChartArea>

      <StatusBar>
        <StatusCell>For Help, press F1</StatusCell>
        <StatusCell $w={85}>default</StatusCell>
        {statusWidths.map((w, i) => <StatusCell key={i} $w={w} />)}
        <StatusCell $w={81}>
          <svg width="10" height="9" viewBox="0 0 10 9" aria-hidden="true">
            <path d="M0 9V7h2v2zM2.500 9V5h2v4zM5 9V3h2v6zM7.500 9V1h2v8z" fill="#3fc055" />
          </svg>
          24.25 ms
        </StatusCell>
      </StatusBar>

      <TaskBar>
        <svg width="44" height="16" viewBox="0 0 44 16" aria-hidden="true">
          <circle cx="21" cy="8" r="7" fill="#8f97a5" />
          <path d="M21 15q-3-5 2-7 4-1 5 1-2 6-7 6z" fill="#e8eaf0" />
        </svg>
        <TaskGroup>
          <StartButton aria-label="Start"><Windows /></StartButton>
          <SearchBox>
            <Icon size={11} color="#2a2c30"><circle cx="6.800" cy="6.800" r="5" strokeWidth="1.700" /><path d="M10.500 10.500l4.500 4.500" strokeWidth="2" /></Icon>
            <input type="search" placeholder="Search" aria-label="Search" />
            <Poet />
          </SearchBox>
          <Apps>
            {apps.map((a) => <AppButton key={a.name} $state={a.state} aria-label={a.name}>{a.art}</AppButton>)}
          </Apps>
        </TaskGroup>
        <Clock>10:15<br />23/04/2026</Clock>
      </TaskBar>
    </Page>
  );
}
